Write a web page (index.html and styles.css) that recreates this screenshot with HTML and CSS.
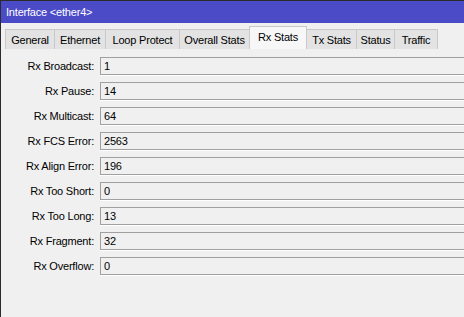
FILE: index.html
```html
<!DOCTYPE html>
<html>
<head>
<meta charset="utf-8">
<link rel="stylesheet" href="styles.css">
</head>
<body>
<div class="window">
  <div class="titlebar">Interface &lt;ether4&gt;</div>
  <div class="tabs">
    <div class="tab w-general">General</div>
    <div class="tab w-ethernet">Ethernet</div>
    <div class="tab w-loop">Loop Protect</div>
    <div class="tab w-overall">Overall Stats</div>
    <div class="tab active w-rx">Rx Stats</div>
    <div class="tab w-tx">Tx Stats</div>
    <div class="tab w-status">Status</div>
    <div class="tab w-traffic">Traffic</div>
  </div>
  <div class="panel">
    <div class="row"><div class="label">Rx Broadcast:</div><div class="field">1</div></div>
    <div class="row"><div class="label">Rx Pause:</div><div class="field">14</div></div>
    <div class="row"><div class="label">Rx Multicast:</div><div class="field">64</div></div>
    <div class="row"><div class="label">Rx FCS Error:</div><div class="field">2563</div></div>
    <div class="row"><div class="label">Rx Align Error:</div><div class="field">196</div></div>
    <div class="row"><div class="label">Rx Too Short:</div><div class="field">0</div></div>
    <div class="row"><div class="label">Rx Too Long:</div><div class="field">13</div></div>
    <div class="row"><div class="label">Rx Fragment:</div><div class="field">32</div></div>
    <div class="row"><div class="label">Rx Overflow:</div><div class="field">0</div></div>
  </div>
</div>
</body>
</html>
```
FILE: styles.css
```css
html, body {
  margin: 0;
  padding: 0;
  width: 464px;
  height: 317px;
  overflow: hidden;
  background: #f0f0f0;
}
.window {
  width: 480px;
  height: 317px;
  border-left: 1px solid #2b2b2b;
  border-top: 1px solid #2b2b2b;
  box-sizing: border-box;
  background: #f0f0f0;
  font-family: "Liberation Sans", Arial, sans-serif;
  font-size: 11px;
  letter-spacing: -0.2px;
  color: #000;
}
.titlebar {
  height: 22px;
  background: #4b4bc8;
  color: #fff;
  font-size: 11px;
  line-height: 22px;
  padding-left: 5px;
}
.tabs {
  display: flex;
  align-items: flex-end;
  height: 26px;
  padding-left: 4px;
}
.tab {
  flex-shrink: 0;
  white-space: nowrap;
  text-align: center;
  height: 20px;
  line-height: 20px;
  background: #e3e3e3;
  border: 1px solid #c9c9c9;
  border-bottom: none;
  margin-right: -1px;
  box-sizing: border-box;
}
.w-general { width: 50px; }
.w-ethernet { width: 52px; }
.w-loop { width: 75px; }
.w-overall { width: 71px; }
.w-rx { width: 58px; }
.w-tx { width: 51px; }
.w-status { width: 39px; }
.w-traffic { width: 44px; }
.tab.active {
  height: 23px;
  line-height: 21px;
  background: #f7f7f7;
  position: relative;
  z-index: 1;
}
.panel {
  padding-top: 8px;
  display: flex;
  flex-direction: column;
  gap: 7px;
}
.row {
  display: flex;
  align-items: center;
  height: 18px;
}
.label {
  width: 99px;
  text-align: right;
  padding-right: 6px;
  box-sizing: border-box;
  white-space: nowrap;
}
.field {
  flex: 1;
  height: 18px;
  box-sizing: border-box;
  border: 1px solid #a0a0a0;
  box-shadow: 0 1px 0 #ffffff;
  background: #f0f0f0;
  line-height: 16px;
  padding-left: 3px;
}
```
